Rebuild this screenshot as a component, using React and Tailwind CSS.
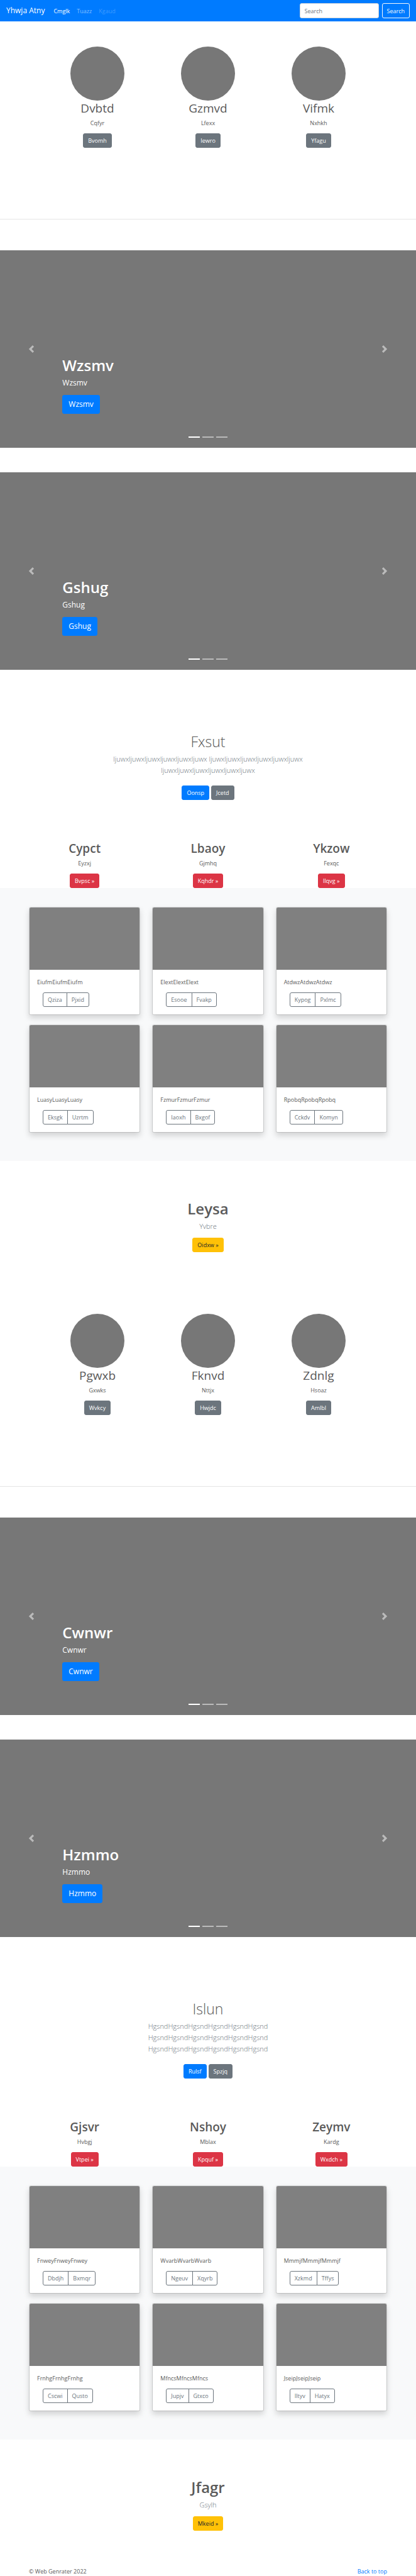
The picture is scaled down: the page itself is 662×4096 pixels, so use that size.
const solid = {
  primary: "border-[#007bff] bg-[#007bff] text-white",
  secondary: "border-[#6c757d] bg-[#6c757d] text-white",
  danger: "border-[#dc3545] bg-[#dc3545] text-white",
  warning: "border-[#ffc107] bg-[#ffc107] text-[#212529]",
};

function LinkButton({ tone, children }) {
  return (
    <a href="#" className={`inline-block rounded-[3px] border px-[7px] py-[3px] text-[9px] leading-[15px] ${solid[tone]}`}>
      {children}
    </a>
  );
}

function Navbar() {
  return (
    <header>
      <nav className="flex items-center bg-[#007bff] px-[10px] py-[5px] text-white">
        <a href="#" className="text-[12px] leading-[18px]">Yhwja Atny</a>
        <ul className="ml-[14px] flex grow gap-[11px] text-[9px] leading-[15px]">
          <li><a href="#">Cmglk</a></li>
          <li><a href="#" className="text-white/50">Tuazz</a></li>
          <li><a href="#" className="text-white/25">Kgaud</a></li>
        </ul>
        <form className="flex gap-[5px]" onSubmit={(e) => e.preventDefault()}>
          <input
            type="search"
            aria-label="Search"
            placeholder="Search"
            className="h-6 w-[126px] rounded-[3px] border border-[#ced4da] bg-white px-[7px] text-[9px] text-[#495057] placeholder:text-[#6c757d]"
          />
          <button type="submit" className="h-6 rounded-[3px] border border-[#f8f9fa] px-[7px] text-[9px] leading-[15px] text-[#f8f9fa]">
            Search
          </button>
        </form>
      </nav>
    </header>
  );
}

function Profiles({ items }) {
  return (
    <section className="mx-auto grid max-w-[588px] grid-cols-3 px-[30px] pt-10 pb-[113px] text-center">
      {items.map(([title, text, action]) => (
        <div key={title}>
          <div className="mx-auto size-[86px] rounded-full bg-[#777]" />
          <h2 className="text-[19px] leading-6">{title}</h2>
          <p className="mt-1 mb-[9px] text-[9px] leading-[15px]">{text}</p>
          <div className="flex justify-center"><LinkButton tone="secondary">{action}</LinkButton></div>
        </div>
      ))}
    </section>
  );
}

function Carousel({ name }) {
  return (
    <section className="relative flex min-h-[314px] flex-col items-start justify-end bg-[#777] px-[15%] pb-[54px] text-white">
      <h1 className="text-[24px] leading-[30px] font-semibold">{name}</h1>
      <p className="mt-1 mb-[10px] text-[12px] leading-[18px]">{name}</p>
      <a href="#" className="rounded-[3px] border border-[#007bff] bg-[#007bff] px-[9px] py-[5px] text-[12px] leading-[18px]">{name}</a>
      <button type="button" aria-label="Previous" className="absolute inset-y-0 left-0 flex w-[15%] items-center justify-center opacity-50">
        <svg viewBox="0 0 8 8" className="size-3" fill="#fff"><path d="M5.25 0l-4 4 4 4 1.5-1.5-2.5-2.5 2.5-2.5-1.5-1.5z" /></svg>
      </button>
      <button type="button" aria-label="Next" className="absolute inset-y-0 right-0 flex w-[15%] items-center justify-center opacity-50">
        <svg viewBox="0 0 8 8" className="size-3" fill="#fff"><path d="M2.75 0l-1.5 1.5 2.5 2.5-2.5 2.5 1.5 1.5 4-4-4-4z" /></svg>
      </button>
      <div className="absolute inset-x-0 bottom-4 flex justify-center gap-[4px]">
        <span className="h-[2px] w-[18px] bg-white" />
        <span className="h-[2px] w-[18px] bg-white/50" />
        <span className="h-[2px] w-[18px] bg-white/50" />
      </div>
    </section>
  );
}

function Intro({ title, text, primary, secondary }) {
  return (
    <section className="flex flex-col items-center pt-[99px] pb-[65px] text-center">
      <h1 className="text-[23px] leading-[30px] font-light">{title}</h1>
      <p className="mt-1 mb-[15px] max-w-[330px] text-[11px] leading-[18px] font-light text-[#6c757d]">{text}</p>
      <div className="flex gap-[3px]">
        <LinkButton tone="primary">{primary}</LinkButton>
        <LinkButton tone="secondary">{secondary}</LinkButton>
      </div>
    </section>
  );
}

function Columns({ items }) {
  return (
    <section className="mx-auto grid max-w-[588px] grid-cols-3 gap-[19px] px-[9px] text-center">
      {items.map(([title, text, action]) => (
        <div key={title}>
          <h2 className="text-[19px] leading-6 font-semibold">{title}</h2>
          <p className="mt-1 mb-[9px] text-[9px] leading-[15px]">{text}</p>
          <div className="flex justify-center"><LinkButton tone="danger">{action} »</LinkButton></div>
        </div>
      ))}
    </section>
  );
}

function Album({ items }) {
  return (
    <section className="bg-[#f8f9fa] pt-[30px] pb-[45px]">
      <div className="mx-auto grid max-w-[588px] grid-cols-3 gap-x-[19px] gap-y-[15px] px-[9px]">
        {items.map(([text, first, second]) => (
          <article key={text} className="overflow-hidden rounded-[3px] border border-black/12 bg-white bg-clip-padding shadow-[0_5px_10px_rgba(0,0,0,0.15)]">
            <div className="h-[99px] bg-[#808080]" />
            <div className="px-3 py-3 text-[9px] leading-[15px]">
              <p>{text}</p>
              <div className="mt-[9px] ml-[9px] flex text-[#6c757d]">
                <button type="button" className="rounded-l-[3px] border border-[#6c757d] px-[7px] py-[3px]">{first}</button>
                <button type="button" className="-ml-px rounded-r-[3px] border border-[#6c757d] px-[7px] py-[3px]">{second}</button>
              </div>
            </div>
          </article>
        ))}
      </div>
    </section>
  );
}

function Callout({ title, text, action }) {
  return (
    <section className="flex flex-col items-center pt-[61px] text-center">
      <h1 className="text-[24px] leading-[30px] font-semibold">{title}</h1>
      <p className="mt-1 mb-[9px] text-[11px] leading-[18px] font-light text-[#6c757d]">{text}</p>
      <LinkButton tone="warning">{action} »</LinkButton>
    </section>
  );
}

const blocks = [
  {
    profiles: [["Dvbtd", "Cqfyr", "Bvomh"], ["Gzmvd", "Lfexx", "Iewro"], ["Vifmk", "Nxhkh", "Yfagu"]],
    slides: ["Wzsmv", "Gshug"],
    intro: {
      title: "Fxsut",
      text: "ljuwxljuwxljuwxljuwxljuwxljuwx ljuwxljuwxljuwxljuwxljuwxljuwx ljuwxljuwxljuwxljuwxljuwxljuwx",
      primary: "Oonsp",
      secondary: "Jcetd",
    },
    columns: [["Cypct", "Eyzxj", "Bvpsc"], ["Lbaoy", "Gjmhq", "Kqhdr"], ["Ykzow", "Fexqc", "Ilqvg"]],
    cards: [
      ["EiufmEiufmEiufm", "Qziza", "Pjxid"],
      ["ElextElextElext", "Esooe", "Fvakp"],
      ["AtdwzAtdwzAtdwz", "Kypog", "Pxlmc"],
      ["LuasyLuasyLuasy", "Eksgk", "Uzrtm"],
      ["FzmurFzmurFzmur", "Iaoxh", "Bxgof"],
      ["RpobqRpobqRpobq", "Cckdv", "Komyn"],
    ],
    callout: { title: "Leysa", text: "Yvbre", action: "Oidxw" },
  },
  {
    profiles: [["Pgwxb", "Gxwks", "Wvkcy"], ["Fknvd", "Nttjx", "Hwjdc"], ["Zdnlg", "Hsoaz", "Amlbl"]],
    slides: ["Cwnwr", "Hzmmo"],
    intro: {
      title: "Islun",
      text: "HgsndHgsndHgsndHgsndHgsndHgsnd HgsndHgsndHgsndHgsndHgsndHgsnd HgsndHgsndHgsndHgsndHgsndHgsnd",
      primary: "Rulsf",
      secondary: "Spzjq",
    },
    columns: [["Gjsvr", "Hvbgj", "Vtpei"], ["Nshoy", "Mblax", "Kpquf"], ["Zeymv", "Kardg", "Wxdch"]],
    cards: [
      ["FnweyFnweyFnwey", "Dbdjh", "Bxmqr"],
      ["WvarbWvarbWvarb", "Ngeuv", "Xqyrb"],
      ["MmmjfMmmjfMmmjf", "Xzkmd", "Tffys"],
      ["FrnhgFrnhgFrnhg", "Cscwi", "Qusto"],
      ["MfncsMfncsMfncs", "Jupjv", "Gtxco"],
      ["JseipJseipJseip", "Iltyv", "Hatyx"],
    ],
    callout: { title: "Jfagr", text: "Gsylh", action: "Mkeid" },
  },
];

function Block({ profiles, slides, intro, columns, cards, callout }) {
  return (
    <div>
      <Profiles items={profiles} />
      <hr className="mb-[49px] border-t border-[#e5e5e5]" />
      <div className="flex flex-col gap-[39px]">
        {slides.map((name) => <Carousel key={name} name={name} />)}
      </div>
      <Intro {...intro} />
      <Columns items={columns} />
      <Album items={cards} />
      <Callout {...callout} />
    </div>
  );
}

export default function App() {
  return (
    <div className="bg-white font-['Open_Sans','Noto_Sans',sans-serif] text-[#5a5a5a]">
      <Navbar />
      <main className="flex flex-col gap-[58px]">
        {blocks.map((block) => <Block key={block.intro.title} {...block} />)}
      </main>
      <footer className="mx-auto mt-[57px] flex max-w-[588px] justify-between px-[9px] text-[9px] leading-[15px]">
        <p>© Web Genrater 2022</p>
        <a href="#" className="text-[#007bff]">Back to top</a>
      </footer>
    </div>
  );
}
